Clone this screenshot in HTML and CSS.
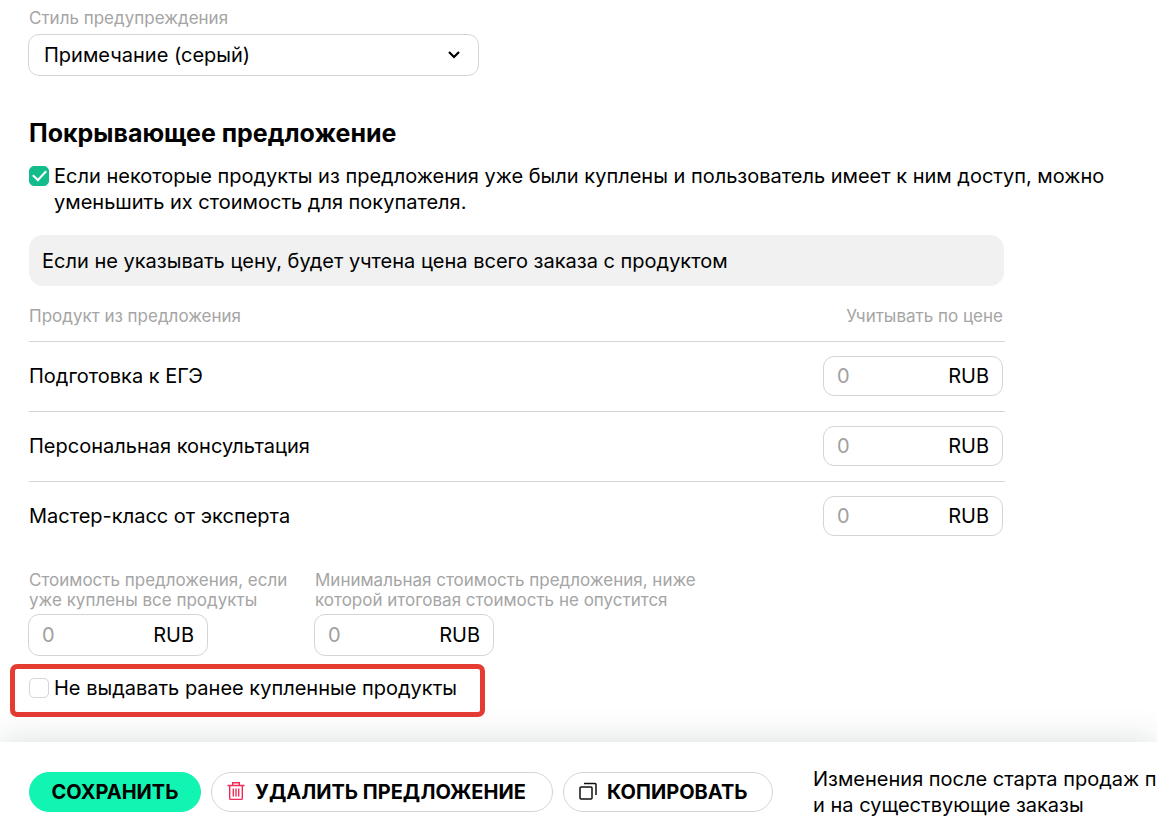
FILE: index.html
```html
<!DOCTYPE html>
<html lang="ru">
<head>
<meta charset="utf-8">
<meta name="viewport" content="width=device-width, initial-scale=1">
<title>Покрывающее предложение</title>
<link rel="stylesheet" href="styles.css">
</head>
<body>
<form class="page">
  <main class="content">
    <div class="field style-field">
      <label class="caption" for="style">Стиль предупреждения</label>
      <div class="select-box">
        <select class="select" id="style"><option>Примечание (серый)</option></select>
        <svg class="chevron" width="14" height="10" viewBox="0 0 14 10" aria-hidden="true"><path d="M2 2l5 5 5-5" fill="none" stroke="#000" stroke-width="2.2"/></svg>
      </div>
    </div>

    <h2 class="title">Покрывающее предложение</h2>

    <label class="check-row">
      <input class="check" type="checkbox" checked>
      <span>Если некоторые продукты из предложения уже были куплены и пользователь имеет к ним доступ, можно<br>уменьшить их стоимость для покупателя.</span>
    </label>

    <p class="note">Если не указывать цену, будет учтена цена всего заказа с продуктом</p>

    <table class="products">
      <thead>
        <tr><th scope="col">Продукт из предложения</th><th scope="col" class="price-col">Учитывать по цене</th></tr>
      </thead>
      <tbody>
        <tr>
          <td><label for="p1">Подготовка к ЕГЭ</label></td>
          <td class="price-col"><div class="money"><input id="p1" class="amount" type="text" inputmode="numeric" placeholder="0"><span>RUB</span></div></td>
        </tr>
        <tr>
          <td><label for="p2">Персональная консультация</label></td>
          <td class="price-col"><div class="money"><input id="p2" class="amount" type="text" inputmode="numeric" placeholder="0"><span>RUB</span></div></td>
        </tr>
        <tr>
          <td><label for="p3">Мастер-класс от эксперта</label></td>
          <td class="price-col"><div class="money"><input id="p3" class="amount" type="text" inputmode="numeric" placeholder="0"><span>RUB</span></div></td>
        </tr>
      </tbody>
    </table>

    <div class="limits">
      <div class="field">
        <label class="caption" for="all">Стоимость предложения, если<br>уже куплены все продукты</label>
        <div class="money tall"><input id="all" class="amount" type="text" inputmode="numeric" placeholder="0"><span>RUB</span></div>
      </div>
      <div class="field">
        <label class="caption" for="min">Минимальная стоимость предложения, ниже<br>которой итоговая стоимость не опустится</label>
        <div class="money tall"><input id="min" class="amount" type="text" inputmode="numeric" placeholder="0"><span>RUB</span></div>
      </div>
    </div>

    <div class="highlight">
      <label class="check-row">
        <input class="check" type="checkbox">
        <span>Не выдавать ранее купленные продукты</span>
      </label>
    </div>
  </main>

  <footer class="actions">
    <button class="btn primary" type="submit">СОХРАНИТЬ</button>
    <button class="btn remove" type="button">
      <svg width="18" height="20" viewBox="0 0 18 20" fill="none" stroke="#f02b57" stroke-width="1.4" aria-hidden="true"><path d="M.5 3.500h17M5.700 3.500V.700h6.600v2.800M2.700 3.500v13q0 .900.900.900h10.800q.900 0 .900-.900v-13M6.300 6.500v8M9 6.500v8M11.700 6.500v8"/></svg>
      <span>УДАЛИТЬ ПРЕДЛОЖЕНИЕ</span>
    </button>
    <button class="btn copy" type="button">
      <svg width="18" height="20" viewBox="0 0 18 20" fill="none" stroke="#111" stroke-width="1.500" aria-hidden="true"><rect x="1" y="5" width="12" height="12" rx="1"/><path d="M5 1.500h11q1 0 1 1V13"/></svg>
      <span>КОПИРОВАТЬ</span>
    </button>
    <p class="hint">Изменения после старта продаж по<br>и на существующие заказы</p>
  </footer>
</form>
</body>
</html>
```
FILE: styles.css
```css
* {
  box-sizing: border-box;
}

body {
  margin: 0;
  background: #fff;
  color: #000;
  font: 20px/26px Inter, "Noto Sans", sans-serif;
  overflow-x: hidden;
}

input,
select,
button {
  font: inherit;
  color: inherit;
}

.page {
  display: flex;
  flex-direction: column;
  min-height: 100vh;
}

.content {
  flex: 1;
  padding: 8px 28px 24px;
}

.caption {
  display: block;
  padding-left: 1px;
  color: #a5a5a5;
  font-size: 17px;
  line-height: 20px;
}

.field {
  display: flex;
  flex-direction: column;
  gap: 4px;
}

.style-field {
  gap: 6px;
  max-width: 451px;
}

.select-box {
  display: grid;
  align-items: center;
}

.select,
.chevron {
  grid-area: 1 / 1;
}

.select {
  width: 100%;
  height: 42px;
  padding: 0 48px 0 15px;
  border: 1px solid #d5d5d5;
  border-radius: 11px;
  background: #fff;
  appearance: none;
}

.chevron {
  justify-self: end;
  margin-right: 18px;
  pointer-events: none;
}

.title {
  margin: 42px 0 15px 1px;
  font-size: 25px;
  line-height: 30px;
  font-weight: 700;
}

.check-row {
  display: flex;
  align-items: flex-start;
  gap: 5px;
  white-space: nowrap;
}

.check {
  flex: none;
  width: 20px;
  height: 20px;
  margin: 3px 0 0 1px;
  border: 1px solid #d5d5d5;
  border-radius: 5px;
  background: #fff;
  appearance: none;
}

.check:checked {
  display: grid;
  place-items: center;
  border-color: #12bc8b;
  background: #12bc8b;
}

.check:checked::before {
  content: "";
  width: 11px;
  height: 6px;
  margin-bottom: 4px;
  border: solid #fff;
  border-width: 0 0 2px 2px;
  transform: rotate(-47deg);
}

.note {
  max-width: 975px;
  margin: 20px 0 0 1px;
  padding: 13px 13px 12px;
  border-radius: 14px;
  background: #f1f1f1;
}

.products {
  width: 100%;
  max-width: 976px;
  margin: 0 0 0 1px;
  border-collapse: collapse;
}

.products th {
  height: 55px;
  padding: 5px 0 0;
  color: #a5a5a5;
  font-size: 17px;
  font-weight: 400;
  line-height: 24px;
  text-align: left;
}

.products td {
  height: 70px;
  padding: 0;
  border-top: 1px solid #d5d5d5;
}

.products .price-col {
  width: 184px;
  padding-right: 2px;
  text-align: right;
}

.money {
  display: flex;
  align-items: center;
  width: 180px;
  height: 40px;
  padding: 0 13px;
  border: 1px solid #d5d5d5;
  border-radius: 11px;
}

.products .money {
  margin-left: auto;
}

.money.tall {
  height: 42px;
}

.amount {
  flex: 1;
  min-width: 0;
  padding: 0;
  border: 0;
  outline: 0;
  background: none;
}

.amount::placeholder {
  color: #a0a0a0;
}

.limits {
  display: grid;
  grid-template-columns: 260px auto;
  justify-content: start;
  gap: 26px;
  margin-top: 19px;
  white-space: nowrap;
}

.highlight {
  width: 475px;
  margin: 8px 0 0 -18px;
  padding: 6px 13px 11px;
  border: 5px solid #e53c32;
  border-radius: 7px;
}

.actions {
  display: flex;
  align-items: flex-start;
  gap: 10px;
  padding: 24px 0 19px 29px;
  background: #fff;
  box-shadow: 0 0 36px rgba(20, 50, 40, 0.16);
  overflow-x: clip;
}

.btn {
  display: flex;
  flex: none;
  align-items: center;
  justify-content: center;
  gap: 10px;
  height: 40px;
  margin-top: 6px;
  padding: 0;
  border: 1px solid #d5d5d5;
  border-radius: 20px;
  background: #fff;
  font-weight: 700;
  white-space: nowrap;
}

.primary {
  width: 172px;
  border-color: #12f5b2;
  background: #12f5b2;
}

.remove {
  justify-content: flex-start;
  width: 342px;
  padding-left: 15px;
}

.copy {
  justify-content: flex-start;
  width: 210px;
  padding-left: 15px;
}

.hint {
  margin: 0 0 0 30px;
  white-space: nowrap;
}
```
